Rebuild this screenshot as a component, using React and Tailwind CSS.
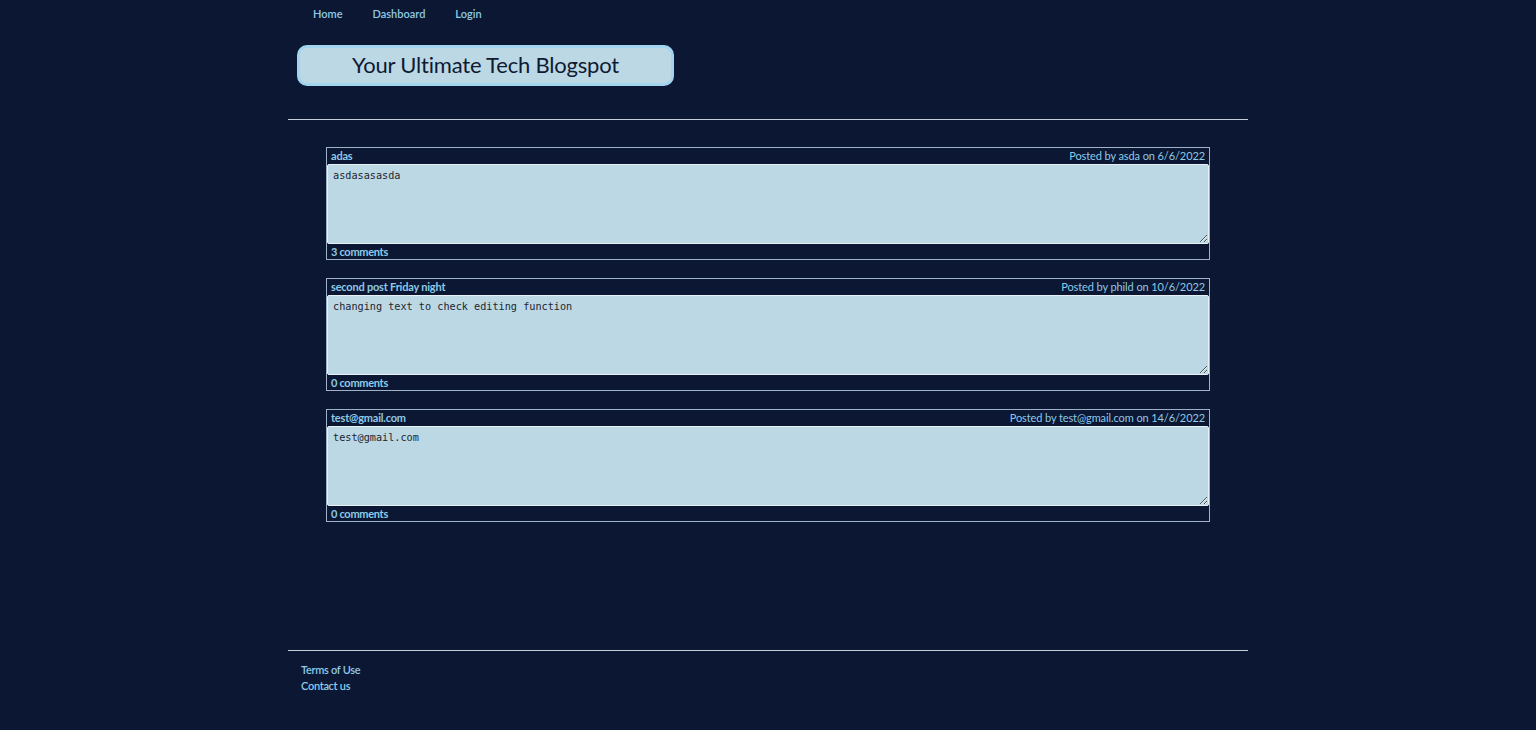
import React from "react";

const posts = [
  { title: "adas", author: "asda", date: "6/6/2022", body: "asdasasasda", comments: "3 comments" },
  { title: "second post Friday night", author: "phild", date: "10/6/2022", body: "changing text to check editing function", comments: "0 comments" },
  { title: "test@gmail.com", author: "test@gmail.com", date: "14/6/2022", body: "test@gmail.com", comments: "0 comments" },
];

export default function App() {
  return (
    <div className="min-h-[730px] bg-[#0b1733] font-['Lato',sans-serif] text-[#8ecae6]">
      <div className="mx-auto w-[960px] flex flex-col min-h-[730px]">
        <nav className="flex gap-[30px] pl-[25px] pt-[6px] text-[11px] font-semibold leading-[16px]">
          <a>Home</a>
          <a>Dashboard</a>
          <a>Login</a>
        </nav>
        <header className="pl-[9px] pt-[23px]">
          <div className="w-[377px] h-[41px] rounded-[10px] border-[3px] border-[#a2d4f0] bg-[#bcd8e4] flex items-center justify-center pb-[2px] text-[22px] text-[#0f1a33] tracking-[-0.2px]">
            Your Ultimate Tech Blogspot
          </div>
        </header>
        <div className="mt-[33px] border-t border-[#c4ccd8]" />
        <main className="flex-1 pt-[27px] flex flex-col gap-[18px] px-[38px]">
          {posts.map((p, i) => (
            <div key={i} className="border border-[#9db2c6] flex flex-col">
              <div className="flex justify-between px-[4px] h-[16px] items-center text-[11px] leading-[16px]">
                <span className="font-bold tracking-[-0.2px]">{p.title}</span>
                <span className="tracking-[-0.1px]">Posted by {p.author} on {p.date}</span>
              </div>
              <textarea
                readOnly
                defaultValue={p.body}
                className="block w-full h-[80px] bg-[#bcd8e4] border border-[#e6f0f5] rounded-[2px] px-[5px] pt-[4px] font-['DejaVu_Sans_Mono',monospace] text-[10.2px] leading-[13px] text-[#1d2630] outline-none"
              />
              <div className="px-[4px] h-[15px] flex items-center pt-[1px] text-[11px] font-bold tracking-[-0.3px]">{p.comments}</div>
            </div>
          ))}
        </main>
        <footer className="mt-[4px] border-t border-[#c4ccd8] pt-[11px] pl-[13px] pb-[36px] text-[11px] leading-[16px] tracking-[-0.3px] font-semibold">
          <div>Terms of Use</div>
          <div>Contact us</div>
        </footer>
      </div>
    </div>
  );
}
